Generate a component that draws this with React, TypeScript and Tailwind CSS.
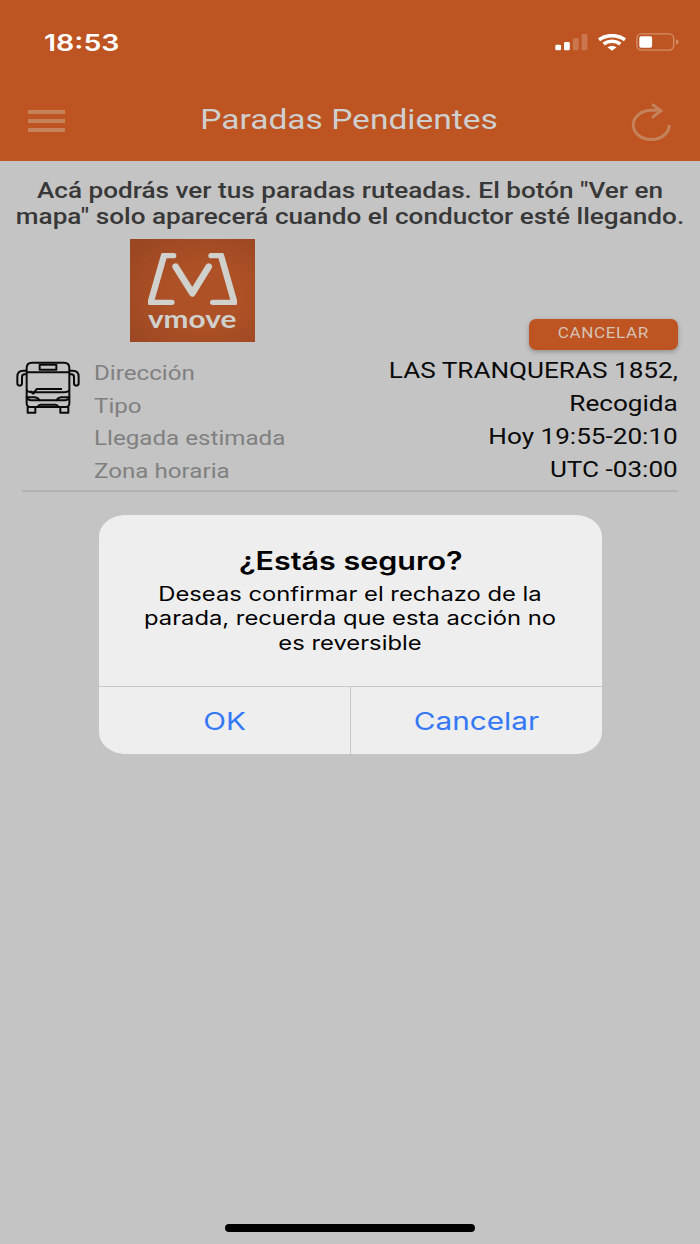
const stop = [
  { label: "Dirección", value: "LAS TRANQUERAS 1852," },
  { label: "Tipo", value: "Recogida" },
  { label: "Llegada estimada", value: "Hoy 19:55-20:10" },
  { label: "Zona horaria", value: "UTC -03:00" },
];

function SignalIcon() {
  return (
    <svg viewBox="0 0 33 17" className="h-[17px] w-[33px]" fill="#fff">
      <rect x="0.3" y="10.8" width="5.8" height="5.5" rx="1.3" />
      <rect x="9" y="8.1" width="5.8" height="8.2" rx="1.3" />
      <g opacity="0.2">
        <rect x="18" y="4.3" width="5.8" height="12" rx="1.3" />
        <rect x="26.6" y="0.1" width="5.8" height="16.2" rx="1.3" />
      </g>
    </svg>
  );
}

function WifiIcon() {
  return (
    <svg viewBox="0 0 28 17" className="h-[17px] w-[28px]" fill="none" stroke="#fff">
      <path d="M1 5.7 Q7 1.7 14 1.7 T27 5.7" strokeWidth="3.7" />
      <path d="M5.6 10 Q9.6 7.2 14 7.2 T22.4 10" strokeWidth="3.5" />
      <path d="M9.5 13.2 Q14 10.2 18.5 13.2 L14 16.7 Z" fill="#fff" stroke="none" />
    </svg>
  );
}

function BatteryIcon() {
  return (
    <svg viewBox="0 0 43 18" className="h-[18px] w-[43px]">
      <rect x="0.9" y="0.9" width="36.8" height="16.2" rx="4.5" fill="none" stroke="#d48e68" strokeWidth="1.4" />
      <rect x="3.3" y="3.3" width="12.8" height="11.4" rx="1.8" fill="#fff" />
      <path d="M40 6.3 Q42.7 7.2 42.7 9 T40 11.8 Z" fill="#d48e68" />
    </svg>
  );
}

function RefreshIcon() {
  return (
    <svg viewBox="630 101 42 42" className="h-[42px] w-[42px]" fill="none" stroke="#c5835b" strokeWidth="3">
      <path d="M669.3 124.9 A18 14.6 0 1 1 651.3 110.3 H660.8" />
      <path d="M652 104.2 L661 110.8 L652 117.6" />
    </svg>
  );
}

function VmoveLogo() {
  return (
    <div className="flex h-[103px] w-[125px] flex-col items-center bg-[radial-gradient(ellipse_at_60%_55%,#ae5126_35%,#974521_100%)] pt-[14px]">
      <svg
        viewBox="55 40 267 156"
        className="h-[52px] w-[89px]"
        fill="none"
        stroke="#d0d1cd"
        strokeLinecap="round"
        strokeLinejoin="round"
        strokeWidth="16"
      >
        <path d="M132 48 H103 L63 188 H127" />
        <path d="M244 48 H274 L314 188 H249" />
        <path d="M103 48 L63 188 M274 48 L314 188" strokeWidth="19" />
        <path d="M138 81 L188 161 L237 81" strokeWidth="20" />
      </svg>
      <span className="mt-[4px] scale-x-[1.225] font-['Lato'] text-[24.3px] leading-[20px] font-bold text-[#d0d1cd]">
        vmove
      </span>
    </div>
  );
}

function BusIcon() {
  return (
    <svg
      viewBox="15 27 198 168"
      className="h-[56px] w-[66px] shrink-0"
      fill="none"
      stroke="#0a0a0a"
      strokeWidth="6"
      strokeLinejoin="round"
    >
      <path d="M50 160 V54 Q50 38 66 38 H162 Q178 38 178 54 V160 Q178 171 168 171 H146 Q142 164 136 164 H92 Q86 164 82 171 H60 Q50 171 50 160 Z" />
      <path d="M50 67 H178" />
      <rect x="89" y="44" width="50" height="15" />
      <path d="M50 62 H40 Q22 62 22 80 V100 Q22 107 29 107 Q36 107 36 100 V81 Q36 73 44 73 H50" />
      <path d="M178 62 H188 Q206 62 206 80 V100 Q206 107 199 107 Q192 107 192 100 V81 Q192 73 184 73 H178" />
      <path d="M50 121 Q56 127 66 127 H162 Q172 127 178 121" />
      <path d="M61 123 L70 131 L80 117 H156" />
      <path d="M50 142 H74 Q86 144 88 151 H62 Q52 149 50 142 Z" />
      <path d="M178 142 H154 Q142 144 140 151 H166 Q176 149 178 142 Z" />
      <path d="M88 151 H140 M82 171 H146" />
      <path d="M53 171 V188 H76 V171 M151 171 V188 H175 V171" />
    </svg>
  );
}

function ConfirmDialog() {
  return (
    <div className="absolute top-[515px] left-[98.5px] flex h-[239px] w-[503.5px] flex-col overflow-hidden rounded-[26px/22px] bg-[#eeeeee] font-['Inter'] text-black">
      <div className="flex h-[171px] flex-col items-center pt-[31px] text-center">
        <h2 className="scale-x-[1.219] text-[25px] leading-[30px] font-semibold whitespace-nowrap">¿Estás seguro?</h2>
        <p className="mt-[5.7px] scale-x-[1.219] text-[19.5px] leading-[24.5px] whitespace-nowrap">
          Deseas confirmar el rechazo de la
          <br />
          parada, recuerda que esta acción no
          <br />
          es reversible
        </p>
      </div>
      <div className="grid flex-1 grid-cols-[252.5px_1fr] border-t border-[#c9c9c9] text-[24.4px] text-[#3478f6]">
        <button className="border-r border-[#c9c9c9] pt-[2px]">
          <span className="inline-block scale-x-[1.219]">OK</span>
        </button>
        <button className="pt-[2px]">
          <span className="inline-block scale-x-[1.219]">Cancelar</span>
        </button>
      </div>
    </div>
  );
}

export default function App() {
  return (
    <div className="relative flex h-[1244px] w-[700px] flex-col overflow-hidden bg-[#c4c4c4] font-['Roboto']">
      {/* Status bar + header */}
      <header className="h-[161px] bg-[#bd5421]">
        <div className="flex h-[84px] items-center justify-between pr-[21px] pl-[44px]">
          <span className="mt-[2.5px] origin-left scale-x-[1.24] font-['Inter'] text-[23px] leading-none font-semibold text-white">
            18:53
          </span>
          <div className="flex items-center">
            <SignalIcon />
            <span className="ml-[10px] flex">
              <WifiIcon />
            </span>
            <span className="ml-[10.5px] flex">
              <BatteryIcon />
            </span>
          </div>
        </div>
        <div className="flex h-[75px] items-center justify-between pr-[28px] pl-[28px]">
          <div className="mb-[1px] flex w-[41px] flex-col gap-[5.3px]">
            <span className="h-[4px] w-[37.4px] bg-[#c5835b]" />
            <span className="h-[4px] w-[37.4px] bg-[#c5835b]" />
            <span className="h-[4px] w-[37.4px] bg-[#c5835b]" />
          </div>
          <h1 className="mb-[4px] scale-x-[1.219] text-[27.5px] leading-none text-[#cfcfcf]">Paradas Pendientes</h1>
          <RefreshIcon />
        </div>
      </header>

      <p className="mt-[17px] scale-x-[1.216] text-center text-[21.5px] leading-[26px] font-medium whitespace-nowrap text-[#383838]">
        Acá podrás ver tus paradas ruteadas. El botón "Ver en
        <br />
        mapa" solo aparecerá cuando el conductor esté llegando.
      </p>

      <div className="mt-[9px] flex h-[115px] items-start justify-between pr-[22px] pl-[129.5px]">
        <VmoveLogo />
        <button className="mt-[80px] flex h-[31px] w-[149px] justify-center rounded-[7px] bg-[#bd5421] pt-[5px] shadow-[0_2px_5px_rgba(0,0,0,0.25)]">
          <span className="scale-x-[1.219] text-[14px] leading-[19px] tracking-[0.5px] text-[#d6c2b6]">CANCELAR</span>
        </button>
      </div>

      {/* Stop details */}
      <div className="flex h-[136px] pr-[22.5px] pl-[14.5px]">
        <div className="pt-[4.5px]">
          <BusIcon />
        </div>
        <div className="mt-[3.9px] ml-[13px] flex-1 text-[19.9px] leading-[32.75px] text-[#808080]">
          {stop.map((row) => (
            <div key={row.label} className="origin-left scale-x-[1.215] whitespace-nowrap">
              {row.label}
            </div>
          ))}
        </div>
        <div className="text-right text-[21.5px] leading-[33.1px] text-[#0a0a0a]">
          {stop.map((row) => (
            <div key={row.value} className="origin-right scale-x-[1.215] whitespace-nowrap">
              {row.value}
            </div>
          ))}
        </div>
      </div>
      <div className="mr-[22px] ml-[22px] h-[2px] bg-[#b3b3b3]" />

      <ConfirmDialog />

      {/* Home indicator */}
      <div className="mt-auto mb-[12.5px] h-[8px] w-[250px] self-center rounded-full bg-black" />
    </div>
  );
}
